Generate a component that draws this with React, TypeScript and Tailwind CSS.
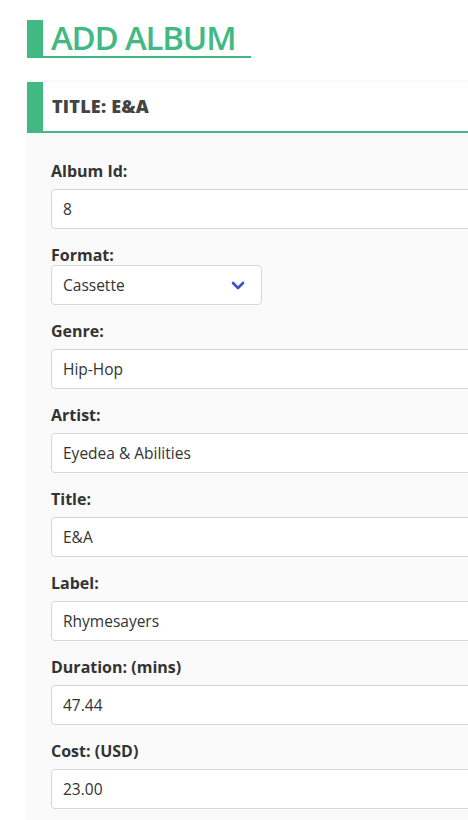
const fields = [
  { label: "Album Id:", value: "8" },
  { label: "Format:", value: "Cassette", select: true },
  { label: "Genre:", value: "Hip-Hop" },
  { label: "Artist:", value: "Eyedea & Abilities" },
  { label: "Title:", value: "E&A" },
  { label: "Label:", value: "Rhymesayers" },
  { label: "Duration: (mins)", value: "47.44" },
  { label: "Cost: (USD)", value: "23.00" },
];

function Chevron() {
  return (
    <svg width="14" height="9" viewBox="0 0 14 9" fill="none">
      <path d="M2 2l5 5 5-5" stroke="#3f51c4" strokeWidth="2.6" strokeLinecap="round" strokeLinejoin="round" />
    </svg>
  );
}

export default function App() {
  return (
    <div
      className="min-h-screen bg-white pt-[20px] pl-[27px] overflow-hidden"
      style={{ fontFamily: '"Open Sans", "Noto Sans", sans-serif' }}
    >
      <h1 className="inline-block border-l-[16px] border-b-2 border-[#42b983] pl-[8px] pr-[16px] text-[33px] leading-[36px] tracking-[-1.2px] text-[#42b983] font-semibold">
        ADD ALBUM
      </h1>

      <div className="mt-[24px] w-[600px] bg-[#fafafa] shadow-[0_0_3px_rgba(0,0,0,0.08)]">
        <div className="flex items-center h-[51px] bg-white border-l-[16px] border-b-2 border-[#42b983] pl-[9px]">
          <span className="text-[18px] font-extrabold text-[#444] tracking-[0.2px]">TITLE: E&amp;A</span>
        </div>

        <div className="pt-[28px] pl-[24px] pb-4 flex flex-col">
          {fields.map((f) => (
            <div key={f.label} className="flex flex-col mb-[16px]">
              <label className={`text-[16px] leading-[20px] font-bold text-[#333] ${f.select ? "mb-0" : "mb-[8px]"}`}>
                {f.label}
              </label>
              {f.select ? (
                <div className="flex items-center justify-between w-[211px] h-[40px] bg-white border border-[#d6d6d6] rounded-[4px] pl-[11px] pr-[16px] text-[15.5px] text-[#333]">
                  <span className="pt-px">{f.value}</span>
                  <Chevron />
                </div>
              ) : (
                <div className="flex items-center h-[40px] bg-white border border-[#d6d6d6] rounded-[4px] pl-[11px] pt-px text-[15.5px] text-[#333]">
                  {f.value}
                </div>
              )}
            </div>
          ))}
        </div>
      </div>
    </div>
  );
}
